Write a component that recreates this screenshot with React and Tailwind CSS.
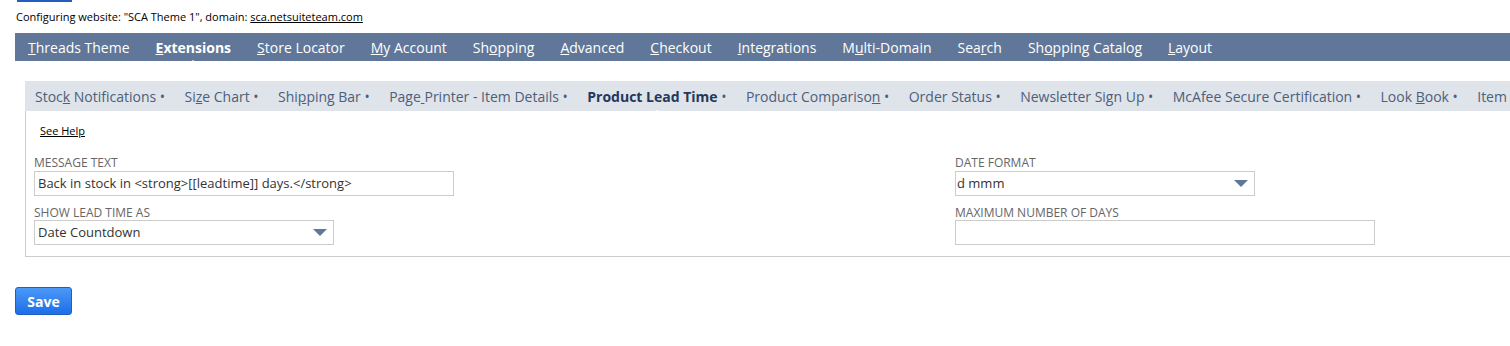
const navItems = [
  ["", "T", "hreads Theme"],
  ["", "E", "xtensions", true],
  ["", "S", "tore Locator"],
  ["", "M", "y Account"],
  ["Sh", "o", "pping"],
  ["", "A", "dvanced"],
  ["", "C", "heckout"],
  ["", "I", "ntegrations"],
  ["M", "u", "lti-Domain"],
  ["Sea", "r", "ch"],
  ["Sh", "o", "pping Catalog"],
  ["", "L", "ayout"],
];

const subTabs = [
  ["Stoc", "k", " Notifications"],
  ["Si", "z", "e Chart"],
  ["Shi", "p", "ping Bar"],
  ["Page", " ", "Printer - Item Details"],
  ["Product Lead Time", "", "", true],
  ["Product Compariso", "n", ""],
  ["Order Status", "", ""],
  ["Newsletter Sign Up", "", ""],
  ["McAfee Secure Certification", "", ""],
  ["Look ", "B", "ook"],
];

const Caret = () => (
  <svg width="14" height="8" viewBox="0 0 14 8" className="shrink-0">
    <path d="M0 0h14L7 7z" fill="#607799" />
  </svg>
);

const Label = ({ children }) => (
  <div className="text-[12px] leading-[14px] text-[#666] uppercase">{children}</div>
);

export default function App() {
  return (
    <div
      className="w-[1510px] h-[346px] bg-white overflow-hidden relative"
      style={{ fontFamily: '"Open Sans", Arial, sans-serif' }}
    >
      <div className="ml-[17px] w-[55px] h-[2px] bg-[#245dc1]" />
      <div className="ml-[16px] mt-[8px] text-[11px] leading-[14px] text-black">
        Configuring website: "SCA Theme 1", domain: <span className="underline">sca.netsuiteteam.com</span>
      </div>

      {/* main nav */}
      <div className="ml-[15px] mt-[9px] h-[28px] bg-[#607799] flex items-center pl-[13px] gap-[26px] whitespace-nowrap">
        {navItems.map(([a, u, b, active], i) => (
          <div
            key={i}
            className={`relative text-[14px] text-white ${active ? "font-bold" : ""}`}
          >
            {a}
            <span className="underline">{u}</span>
            {b}
            {active && (
              <div className="absolute left-1/2 -translate-x-1/2 bottom-[-8px] w-0 h-0 border-l-[7px] border-r-[7px] border-b-[6px] border-l-transparent border-r-transparent border-b-white" />
            )}
          </div>
        ))}
      </div>

      {/* sub tabs */}
      <div className="ml-[25px] mt-[20px] h-[30px] bg-[#dfe3ea] flex items-center pl-[10px] gap-[19.4px] whitespace-nowrap">
        {subTabs.map(([a, u, b, active], i) => (
          <div
            key={i}
            className={`relative text-[14px] ${active ? "font-bold text-[#24385b]" : "text-[#4d5f7a]"}`}
          >
            {a}
            {u && <span className="underline">{u}</span>}
            {b} <span className="font-normal text-[#4d5f7a]">•</span>
            {active && (
              <div className="absolute left-1/2 -translate-x-1/2 bottom-[-8px] w-0 h-0 border-l-[7px] border-r-[7px] border-b-[5px] border-l-transparent border-r-transparent border-b-white" />
            )}
          </div>
        ))}
        <div className="text-[14px] text-[#4d5f7a]">Item</div>
      </div>

      {/* content box */}
      <div className="ml-[25px] h-[146px] border-l border-b border-[#cccccc] pl-[8px] pt-[13px]">
        <div className="pl-[6px] text-[11px] leading-[14px] text-black underline">See Help</div>
        <div className="flex mt-[18px]">
          <div className="w-[921px] flex flex-col">
            <Label>MESSAGE TEXT</Label>
            <div className="mt-[1px] w-[420px] h-[25px] border border-[#cccccc] flex items-center px-[3px] text-[13px] text-[#333]">
              Back in stock in &lt;strong&gt;[[leadtime]] days.&lt;/strong&gt;
            </div>
            <div className="mt-[10px]">
              <Label>SHOW LEAD TIME AS</Label>
            </div>
            <div className="w-[300px] h-[25px] border border-[#cccccc] flex items-center justify-between pl-[3px] pr-[6px] text-[13px] text-[#333]">
              <span>Date Countdown</span>
              <Caret />
            </div>
          </div>
          <div className="flex flex-col">
            <Label>DATE FORMAT</Label>
            <div className="mt-[1px] w-[300px] h-[25px] border border-[#cccccc] flex items-center justify-between pl-[1px] pr-[6px] text-[13px] text-[#333]">
              <span>d mmm</span>
              <Caret />
            </div>
            <div className="mt-[10px]">
              <Label>MAXIMUM NUMBER OF DAYS</Label>
            </div>
            <div className="w-[420px] h-[25px] border border-[#cccccc]" />
          </div>
        </div>
      </div>

      <button className="ml-[15px] mt-[30px] w-[57px] h-[28px] rounded-[3px] border border-[#1f5fc4] bg-gradient-to-b from-[#4b98f7] to-[#1b6ee8] text-white font-bold text-[14px] flex items-center justify-center">
        Save
      </button>
    </div>
  );
}
